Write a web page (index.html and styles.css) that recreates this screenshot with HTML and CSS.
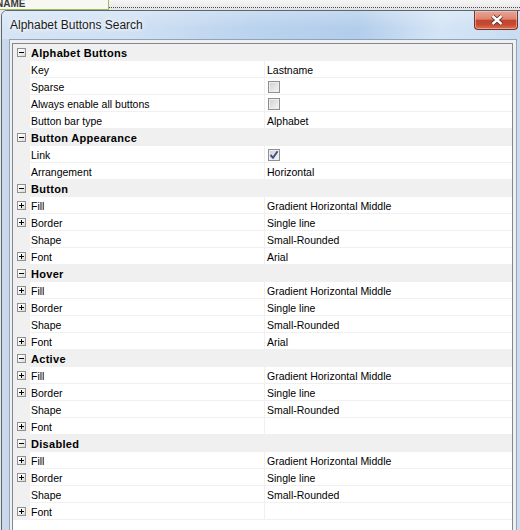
FILE: index.html
```html
<!DOCTYPE html>
<html>
<head>
<meta charset="utf-8">
<link rel="stylesheet" href="styles.css">
</head>
<body>
<div class="deskbar">
  <div class="namebox"><span>NAME</span></div>
  <div class="dots"></div>
</div>
<div class="win">
  <div class="titlebar">
    <span class="title">Alphabet Buttons Search</span>
    <div class="close">
      <svg width="14" height="12" viewBox="0 0 14 12">
        <path d="M2.5 2 L11.5 10 M11.5 2 L2.5 10" stroke="#4a2a24" stroke-width="4.2" fill="none"/>
        <path d="M2.5 2 L11.5 10 M11.5 2 L2.5 10" stroke="#ffffff" stroke-width="2.4" fill="none"/>
      </svg>
    </div>
  </div>
  <div class="client">
    <div class="grid">
      <div class="cat"><span class="gut"><i class="box"></i></span><span class="catlabel">Alphabet Buttons</span></div>
      <div class="row"><span class="gut"></span><span class="lbl">Key</span><span class="val">Lastname</span></div>
      <div class="row"><span class="gut"></span><span class="lbl">Sparse</span><span class="val"><i class="cb"></i></span></div>
      <div class="row"><span class="gut"></span><span class="lbl">Always enable all buttons</span><span class="val"><i class="cb"></i></span></div>
      <div class="row"><span class="gut"></span><span class="lbl">Button bar type</span><span class="val">Alphabet</span></div>

      <div class="cat"><span class="gut"><i class="box"></i></span><span class="catlabel">Button Appearance</span></div>
      <div class="row"><span class="gut"></span><span class="lbl">Link</span><span class="val"><i class="cb checked"><svg width="10" height="10" viewBox="0 0 10 10"><path d="M1.5 5 L4 7.8 L8.6 1.2" stroke="#3d4f86" stroke-width="1.9" fill="none"/></svg></i></span></div>
      <div class="row"><span class="gut"></span><span class="lbl">Arrangement</span><span class="val">Horizontal</span></div>

      <div class="cat"><span class="gut"><i class="box"></i></span><span class="catlabel">Button</span></div>
      <div class="row"><span class="gut"><i class="box plus"></i></span><span class="lbl">Fill</span><span class="val">Gradient Horizontal Middle</span></div>
      <div class="row"><span class="gut"><i class="box plus"></i></span><span class="lbl">Border</span><span class="val">Single line</span></div>
      <div class="row"><span class="gut"></span><span class="lbl">Shape</span><span class="val">Small-Rounded</span></div>
      <div class="row"><span class="gut"><i class="box plus"></i></span><span class="lbl">Font</span><span class="val">Arial</span></div>

      <div class="cat"><span class="gut"><i class="box"></i></span><span class="catlabel">Hover</span></div>
      <div class="row"><span class="gut"><i class="box plus"></i></span><span class="lbl">Fill</span><span class="val">Gradient Horizontal Middle</span></div>
      <div class="row"><span class="gut"><i class="box plus"></i></span><span class="lbl">Border</span><span class="val">Single line</span></div>
      <div class="row"><span class="gut"></span><span class="lbl">Shape</span><span class="val">Small-Rounded</span></div>
      <div class="row"><span class="gut"><i class="box plus"></i></span><span class="lbl">Font</span><span class="val">Arial</span></div>

      <div class="cat"><span class="gut"><i class="box"></i></span><span class="catlabel">Active</span></div>
      <div class="row"><span class="gut"><i class="box plus"></i></span><span class="lbl">Fill</span><span class="val">Gradient Horizontal Middle</span></div>
      <div class="row"><span class="gut"><i class="box plus"></i></span><span class="lbl">Border</span><span class="val">Single line</span></div>
      <div class="row"><span class="gut"></span><span class="lbl">Shape</span><span class="val">Small-Rounded</span></div>
      <div class="row"><span class="gut"><i class="box plus"></i></span><span class="lbl">Font</span><span class="val"></span></div>

      <div class="cat"><span class="gut"><i class="box"></i></span><span class="catlabel">Disabled</span></div>
      <div class="row"><span class="gut"><i class="box plus"></i></span><span class="lbl">Fill</span><span class="val">Gradient Horizontal Middle</span></div>
      <div class="row"><span class="gut"><i class="box plus"></i></span><span class="lbl">Border</span><span class="val">Single line</span></div>
      <div class="row"><span class="gut"></span><span class="lbl">Shape</span><span class="val">Small-Rounded</span></div>
      <div class="row"><span class="gut"><i class="box plus"></i></span><span class="lbl">Font</span><span class="val"></span></div>
    </div>
  </div>
</div>
</body>
</html>
```

FILE: styles.css
```css
* { box-sizing: border-box; }
html, body { margin: 0; padding: 0; }
body {
  width: 520px;
  height: 530px;
  overflow: hidden;
  background: #e8e8e8;
  font-family: "Liberation Sans", Arial, sans-serif;
  color: #000;
}

/* desktop strip behind the dialog */
.deskbar {
  height: 10px;
  display: flex;
  background: linear-gradient(#f6f6f6, #e4e4e4);
}
.namebox {
  width: 109px;
  height: 10px;
  border-right: 1px solid #9cbb5a;
  border-bottom: 1px solid #9cbb5a;
  overflow: hidden;
  background: #f8f8f3;
}
.namebox span {
  display: block;
  margin-left: -4px;
  margin-top: -1px;
  font-size: 10px;
  line-height: 10px;
  font-weight: bold;
  color: #3a3a3a;
}
.dots {
  flex: 1;
  height: 8px;
  border-bottom: 1px dotted #4a4a4a;
}

/* window */
.win {
  margin-left: 1px;
  width: 524px;
  height: 540px;
  border: 1px solid #5b6673;
  border-radius: 6px 6px 0 0;
  background: linear-gradient(90deg, #c9d9ea, #cddcec);
  overflow: hidden;
}
.titlebar {
  height: 28px;
  display: flex;
  align-items: flex-start;
  background:
    linear-gradient(rgba(255,255,255,0.25), rgba(255,255,255,0) 60%),
    linear-gradient(90deg, #d6e5f5 0%, #cfe0f3 25%, #b9d2ee 50%, #b2cdeb 68%, #d5e5f6 84%, #c8dbf1 100%);
}
.title {
  padding-left: 8px;
  font-size: 12px;
  line-height: 28px;
  color: #1b1b1b;
  text-shadow: 0 0 4px #ffffff, 0 0 6px #ffffff;
}
.close {
  margin-left: auto;
  margin-right: 6px;
  width: 44px;
  height: 19px;
  border: 1px solid #7a3128;
  border-top: none;
  border-radius: 0 0 4px 4px;
  background: linear-gradient(#eaa596 0%, #dd8470 45%, #c5432c 52%, #c64a31 75%, #d87355 100%);
  box-shadow: inset 0 0 0 1px rgba(255,210,200,0.5);
  display: flex;
  align-items: center;
  justify-content: center;
}
.close svg { display: block; margin-left: 2px; }

.client {
  margin: 0 7px;
  height: 520px;
  border: 1px solid #8fa3ba;
  background: #f0f0f0;
  padding: 3px 3px 0 2px;
}

/* property grid */
.grid {
  border: 1px solid #828790;
  background: #ffffff;
  height: 520px;
  overflow: hidden;
}
.row, .cat {
  display: flex;
  height: 17px;
}
.gut {
  width: 17px;
  flex: none;
  background: #f0f0f0;
  display: flex;
  align-items: center;
  padding-left: 4px;
  padding-bottom: 1px;
}
.box {
  display: block;
  width: 9px;
  height: 9px;
  border: 1px solid #8f8f8f;
  background:
    linear-gradient(#000, #000) center / 5px 1px no-repeat,
    linear-gradient(135deg, #ffffff 20%, #d9d9d9);
}
.box.plus {
  background:
    linear-gradient(#000, #000) center / 5px 1px no-repeat,
    linear-gradient(#000, #000) center / 1px 5px no-repeat,
    linear-gradient(135deg, #ffffff 20%, #d9d9d9);
}

.cat { background: #f0f0f0; }
.catlabel {
  height: 17px;
  padding: 2px 0 0 1px;
  font-size: 11px;
  font-weight: bold;
  letter-spacing: 0.3px;
  line-height: 14px;
  white-space: nowrap;
}

.lbl, .val {
  height: 17px;
  background: #ffffff;
  border-bottom: 1px solid #f0f0f0;
  padding-top: 2px;
  font-size: 10.5px;
  line-height: 14px;
  white-space: nowrap;
  color: #000;
}
.lbl {
  width: 234px;
  flex: none;
  padding-left: 1px;
}
.val {
  flex: 1;
  border-left: 1px solid #f0f0f0;
  padding-left: 2px;
  display: flex;
  align-items: flex-start;
}
.cb {
  display: flex;
  align-items: center;
  justify-content: center;
  width: 12px;
  height: 12px;
  margin: 1px 0 0 1px;
  border: 1px solid #8e8f8f;
  background: linear-gradient(135deg, #cfcfcf, #f6f6f6);
  box-shadow: inset 0 0 0 1px #eeeeee;
}
.cb svg { display: block; }
```
